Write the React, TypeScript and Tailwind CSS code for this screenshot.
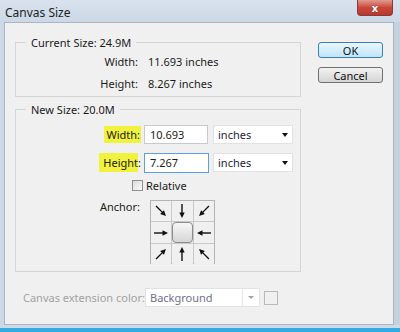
import React from 'react';

const font = "font-['Segoe_UI','Noto_Sans',sans-serif]";

const Arrow: React.FC<{ angle: number }> = ({ angle }) => (
  <svg width="20" height="20" viewBox="0 0 20 20">
    <g transform={`rotate(${angle} 10 10)`}>
      <line x1="3" y1="10" x2="13" y2="10" stroke="#111" strokeWidth="1.4" />
      <polygon points="17,10 11.5,7.3 11.5,12.7" fill="#111" />
    </g>
  </svg>
);

const AnchorGrid: React.FC = () => {
  const cells: (number | null)[] = [45, 90, 135, 0, null, 180, -45, -90, -135];
  return (
    <div className="grid grid-cols-3 gap-px bg-[#c9c9c9] border border-[#b4b4b4] w-[65px] h-[64px]">
      {cells.map((a, i) => (
        <div key={i} className="bg-[#f0f0f0] flex items-center justify-center">
          {a === null ? (
            <div className="w-[21px] h-[21px] rounded-[4px] border border-[#8c8c8c] bg-gradient-to-b from-[#f7f7f7] to-[#d6d6d6]" />
          ) : (
            <Arrow angle={a} />
          )}
        </div>
      ))}
    </div>
  );
};

const Select: React.FC<{ value: string; width: string; disabled?: boolean }> = ({ value, width, disabled }) => (
  <div className={`${width} h-[19px] bg-white border border-[#e2e2e2] flex items-center`}>
    <span className={`flex-1 pl-[4px] ${disabled ? 'text-[#6f6f8c]' : 'text-[#1e1e3c]'}`}>{value}</span>
    {disabled ? (
      <span className="w-[17px] h-full border-l border-[#e6e6e6] flex items-center justify-center">
        <span className="border-x-[3px] border-x-transparent border-t-[3px] border-t-[#a0a0a0]" />
      </span>
    ) : (
      <span className="w-[14px] flex items-center justify-center">
        <span className="border-x-[3.5px] border-x-transparent border-t-[4px] border-t-[#111]" />
      </span>
    )}
  </div>
);

export default function App() {
  return (
    <div className={`w-[400px] h-[332px] flex flex-col bg-[#cfdae6] text-[11px] leading-[15px] text-[#1b1b1b] ${font}`}>
      {/* title bar */}
      <div className="h-[22px] flex items-start justify-between bg-gradient-to-b from-[#d9e3ee] to-[#cbd8e5]">
        <span className="pl-[5px] pt-[5px] text-[12px] text-[#222]">Canvas Size</span>
        <div className="mr-[7px] w-[36px] h-[16px] rounded-b-[4px] border border-t-0 border-[#8a3a33] bg-gradient-to-b from-[#e09a8f] via-[#c9473a] to-[#b73a2e] flex items-center justify-center">
          <span className="text-white font-bold text-[11px] leading-none [text-shadow:0_0_1px_#333]">x</span>
        </div>
      </div>

      <div className="flex flex-1">
        <div className="w-[4px] bg-[#cbd8e6]" />
        {/* content */}
        <div className="flex-1 bg-[#f0f0f0] border border-[#aab5c1] flex flex-col">
          <div className="flex pl-[10px]">
            <div className="w-[286px]">
              <fieldset className="mt-[12px] border border-[#d5d5d5] pb-[2px]">
                <legend className="ml-[10px] px-[5px]">Current Size: 24.9M</legend>
                <div className="flex h-[22px] items-center">
                  <span className="w-[122px] text-right">Width:</span>
                  <span className="ml-[10px]">11.693 inches</span>
                </div>
                <div className="flex h-[22px] items-center">
                  <span className="w-[122px] text-right">Height:</span>
                  <span className="ml-[10px]">8.267 inches</span>
                </div>
              </fieldset>

              <fieldset className="mt-[5px] border border-[#d5d5d5] pb-[7px]">
                <legend className="ml-[10px] px-[5px]">New Size: 20.0M</legend>
                <div className="flex items-center mt-[8px] h-[19px]">
                  <span className="w-[125px] flex justify-end">
                    <span className="bg-[#f0f23e] pl-[2px] pr-[1px] py-[1px]">Width:</span>
                  </span>
                  <div className="ml-[3px] w-[64px] h-[19px] bg-white border border-[#c7c9cf] pl-[5px] flex items-center">10.693</div>
                  <div className="ml-[5px]"><Select value="inches" width="w-[80px]" /></div>
                </div>
                <div className="flex items-center mt-[9px] h-[19px]">
                  <span className="w-[125px] flex justify-end">
                    <span className="bg-[#f0f23e] pl-[4px] py-[2px]">Height</span>
                    <span className="py-[2px]">:</span>
                  </span>
                  <div className="ml-[3px] w-[65px] h-[20px] bg-white border border-[#5d9fd6] pl-[5px] flex items-center">7.267</div>
                  <div className="ml-[4px]"><Select value="inches" width="w-[80px]" /></div>
                </div>
                <div className="flex items-center mt-[5px] h-[16px] ml-[116px]">
                  <span className="w-[11px] h-[11px] border border-[#8e8f8f] bg-gradient-to-br from-[#dcdcdc] to-[#fbfbfb]" />
                  <span className="ml-[3px]">Relative</span>
                </div>
                <div className="flex items-start mt-[7px]">
                  <span className="w-[124px] text-right -mt-[1px]">Anchor:</span>
                  <div className="ml-[10px]"><AnchorGrid /></div>
                </div>
              </fieldset>
            </div>

            <div className="ml-[17px] pt-[19px] flex flex-col">
              <div className="w-[65px] h-[16px] rounded-[3px] border border-[#3c7fb1] bg-gradient-to-b from-[#eaf6fd] to-[#bee6fd] flex items-center justify-center text-[#111]">OK</div>
              <div className="mt-[9px] w-[65px] h-[16px] rounded-[3px] border border-[#707070] bg-gradient-to-b from-[#f2f2f2] to-[#d5d5d5] flex items-center justify-center text-[#111]">Cancel</div>
            </div>
          </div>

          <div className="flex items-center pl-[18px] mt-[16px]">
            <span className="w-[122px] whitespace-nowrap text-[#a2a2a2]">Canvas extension color:</span>
            <Select value="Background" width="w-[115px]" disabled />
            <span className="ml-[4px] w-[14px] h-[14px] border border-[#b9b9b9] bg-[#f0f0f0]" />
          </div>
        </div>
        <div className="w-[6px] bg-[#c4d2e0]" />
      </div>

      <div className="h-[7px] flex flex-col">
        <div className="h-[3px] bg-[#cfdae6]" />
        <div className="flex-1 bg-[#33ace2]" />
      </div>
    </div>
  );
}
